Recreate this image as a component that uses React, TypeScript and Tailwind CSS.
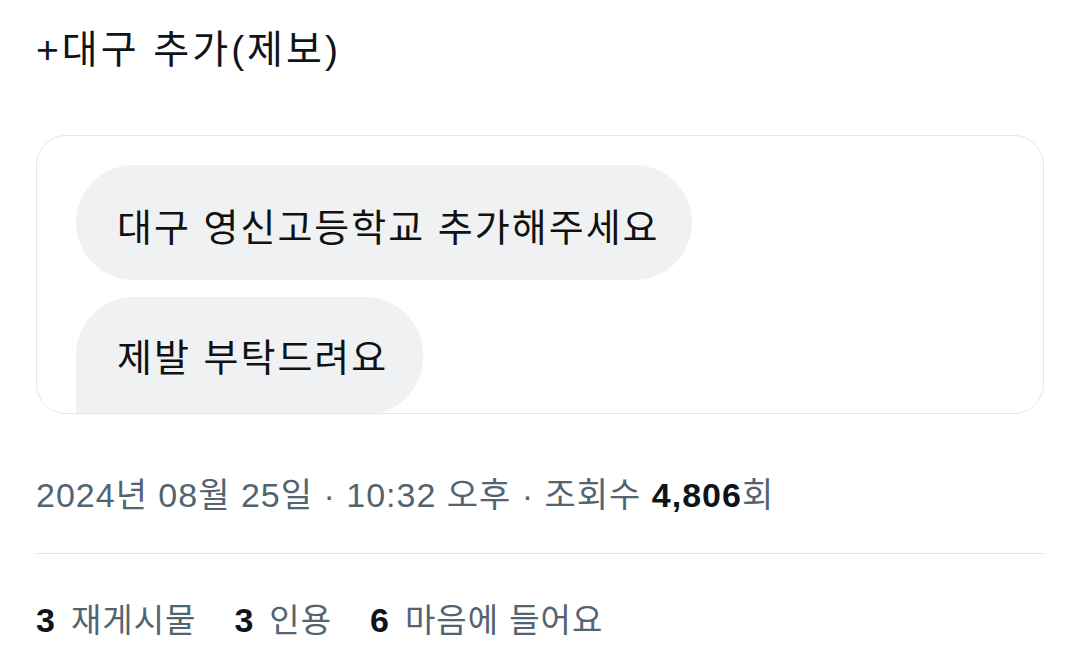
import React from 'react';

const stats = [
  { count: '3', label: '재게시물' },
  { count: '3', label: '인용' },
  { count: '6', label: '마음에 들어요' },
];

const App: React.FC = () => {
  return (
    <div className="min-h-screen w-[1080px] bg-white px-9 font-['Liberation_Sans','Noto_Sans_CJK_KR',sans-serif] text-[#0f1419]">
      {/* tweet text */}
      <div className="pt-[24px] text-[39px] leading-[52px] tracking-[3px]">+대구 추가(제보)</div>

      {/* attached image: chat capture */}
      <div className="mt-[59px] h-[279px] overflow-hidden rounded-[30px] border border-[#e3e6e8] bg-white pl-[39px] pt-[29px]">
        <div className="flex h-[115px] w-[616px] items-center rounded-full bg-[#eff1f3] pl-[41px] pt-[12px] text-[38px] tracking-[2px] text-[#111111]">
          대구 영신고등학교 추가해주세요
        </div>
        <div className="mt-[17px] flex h-[118px] w-[347px] items-center rounded-[58px] rounded-bl-none bg-[#eff1f3] pl-[41px] pt-[4px] text-[38px] tracking-[2px] text-[#111111]">
          제발 부탁드려요
        </div>
      </div>

      {/* timestamp + views */}
      <div className="mt-[59px] text-[34px] leading-[44px] tracking-[1px] text-[#536471]">
        2024년 08월 25일 · 10:32 오후 · 조회수{' '}
        <span className="font-bold text-[#0f1419]">4,806</span>회
      </div>

      <div className="mt-[36px] h-px bg-[#e1e5e8]" />

      {/* engagement */}
      <div className="mt-[44px] flex gap-[38px] text-[34px] leading-[44px]">
        {stats.map((s, i) => (
          <div key={i} className="flex items-baseline gap-[16px]">
            <span className="font-bold text-[#0f1419]">{s.count}</span>
            <span className="text-[33px] tracking-[1px] text-[#536471]">{s.label}</span>
          </div>
        ))}
      </div>
    </div>
  );
};

export default App;
